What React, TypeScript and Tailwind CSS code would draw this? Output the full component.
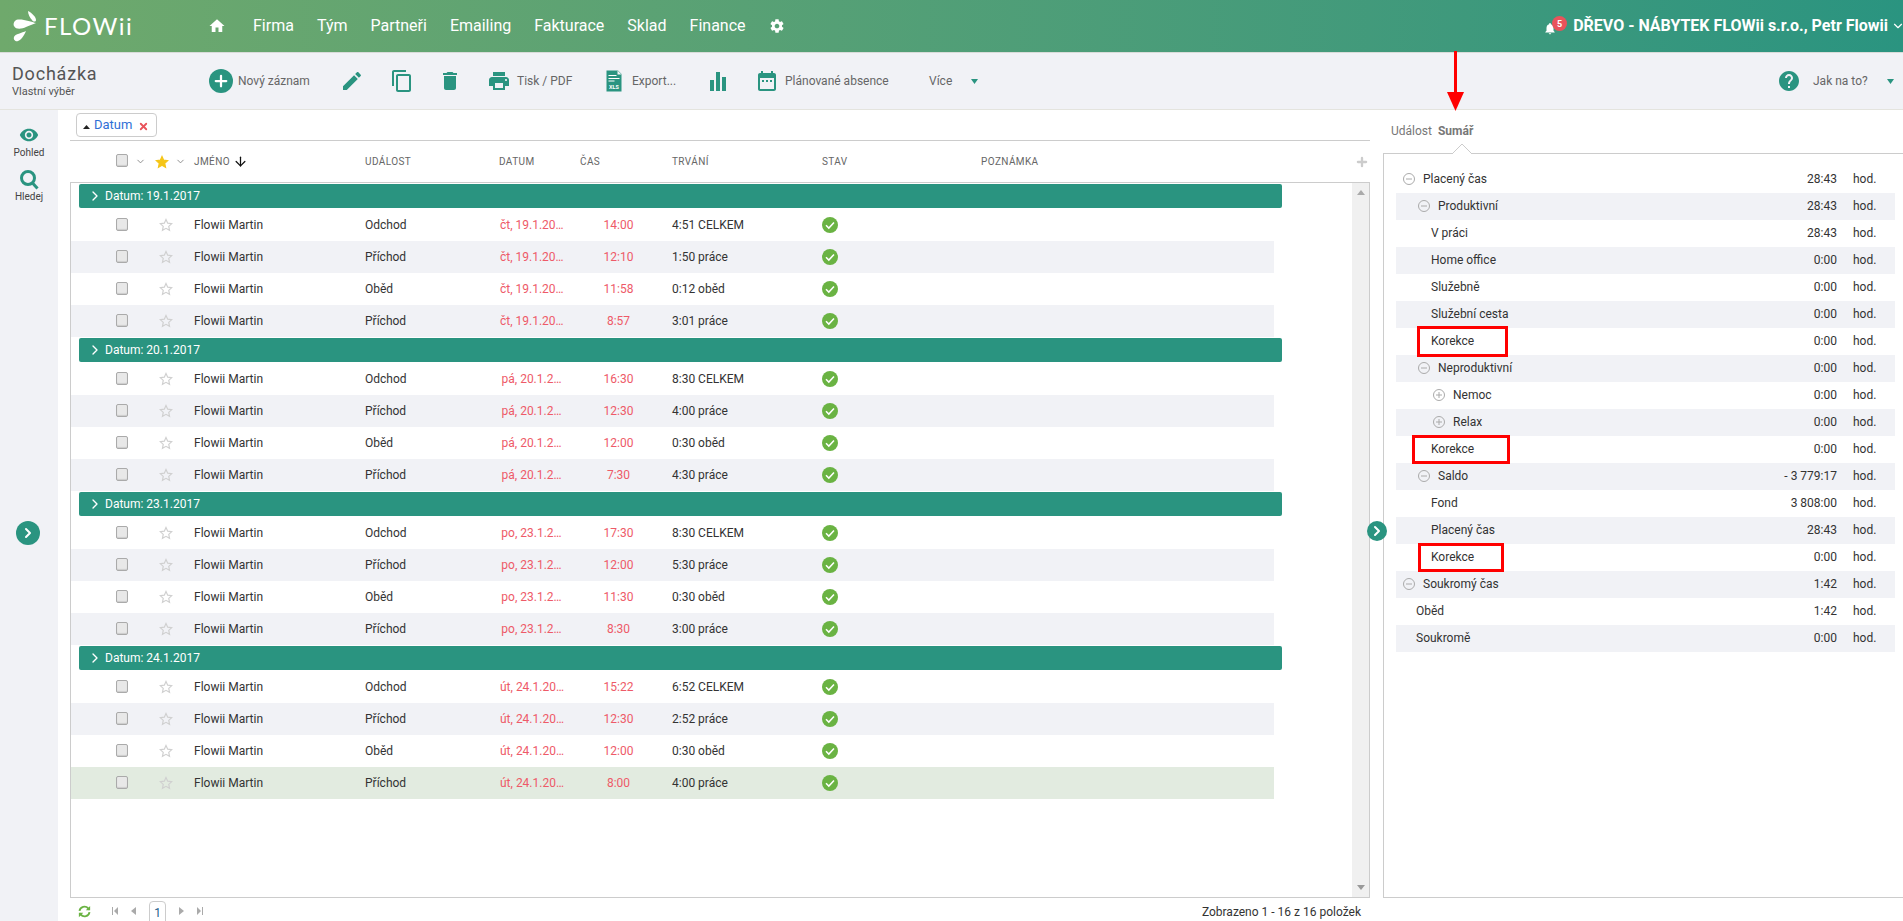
import React from "react";
import { ChevronDown, ChevronRight, ArrowDown, Plus, X } from "lucide-react";

const TEAL = "#2a9480";

const MI: React.FC<{ d: string; size?: number; className?: string }> = ({ d, size = 24, className }) => (
  <svg width={size} height={size} viewBox="0 0 24 24" fill={TEAL} className={className}>
    <path d={d} />
  </svg>
);

const Logo = () => (
  <svg width="26" height="32" viewBox="0 0 26 32" fill="#fff">
    <path d="M16 1C20 3 24 7 24 10C24 12 21 12 20 10C18 8 16 4 16 1Z" />
    <path d="M24 13C20 12 12 9 6 9.5C2 10 1 14 2 16C4 20 10 19 14 17C17 16 21 14 24 13Z" />
    <path d="M14 21C10 23 3 24 2 27C1 30 4 32 6 31C9 30 12 26 14 21Z" />
  </svg>
);

const Checkbox = () => (
  <span className="mb-[2px] block h-[13px] w-[12px] rounded-[2px] border border-[#aaa] bg-[#e8e8e8] shadow-[inset_0_-1px_1px_#ccc]" />
);

const Star = ({ filled }: { filled?: boolean }) => (
  <svg width="14" height="14" viewBox="0 0 24 24" fill={filled ? "#f5c518" : "none"} stroke={filled ? "#f5c518" : "#d0d0d0"} strokeWidth="2">
    <path d="M12 2.5l2.9 6.3 6.9.8-5.1 4.7 1.4 6.8-6.1-3.4-6.1 3.4 1.4-6.8L2.2 9.6l6.9-.8z" />
  </svg>
);

const Check = () => (
  <svg width="16" height="16" viewBox="0 0 16 16">
    <circle cx="8" cy="8" r="8" fill="#6ab343" />
    <path d="M4 8.3l2.8 2.8L12 5.4" fill="none" stroke="#fff" strokeWidth="1.5" />
  </svg>
);

const Caret = ({ color = TEAL }: { color?: string }) => (
  <svg width="7" height="5" viewBox="0 0 7 5" fill={color}>
    <path d="M0 0h7L3.5 5z" />
  </svg>
);

const Toggle = ({ open }: { open: boolean }) => (
  <svg width="12" height="12" viewBox="0 0 12 12" fill="none" stroke="#aaa" className="mr-[8px] shrink-0">
    <circle cx="6" cy="6" r="5.5" />
    <path d="M3 6h6" />
    {!open && <path d="M6 3v6" />}
  </svg>
);

const GRID = "grid grid-cols-[75px_40px_179px_135px_63px_109px_150px_159px_1fr] items-center";

type Row = { event: string; date: string; time: string; dur: string };

const groups: { title: string; rows: Row[] }[] = [
  {
    title: "Datum: 19.1.2017",
    rows: [
      { event: "Odchod", date: "čt, 19.1.20…", time: "14:00", dur: "4:51 CELKEM" },
      { event: "Příchod", date: "čt, 19.1.20…", time: "12:10", dur: "1:50 práce" },
      { event: "Oběd", date: "čt, 19.1.20…", time: "11:58", dur: "0:12 oběd" },
      { event: "Příchod", date: "čt, 19.1.20…", time: "8:57", dur: "3:01 práce" },
    ],
  },
  {
    title: "Datum: 20.1.2017",
    rows: [
      { event: "Odchod", date: "pá, 20.1.2…", time: "16:30", dur: "8:30 CELKEM" },
      { event: "Příchod", date: "pá, 20.1.2…", time: "12:30", dur: "4:00 práce" },
      { event: "Oběd", date: "pá, 20.1.2…", time: "12:00", dur: "0:30 oběd" },
      { event: "Příchod", date: "pá, 20.1.2…", time: "7:30", dur: "4:30 práce" },
    ],
  },
  {
    title: "Datum: 23.1.2017",
    rows: [
      { event: "Odchod", date: "po, 23.1.2…", time: "17:30", dur: "8:30 CELKEM" },
      { event: "Příchod", date: "po, 23.1.2…", time: "12:00", dur: "5:30 práce" },
      { event: "Oběd", date: "po, 23.1.2…", time: "11:30", dur: "0:30 oběd" },
      { event: "Příchod", date: "po, 23.1.2…", time: "8:30", dur: "3:00 práce" },
    ],
  },
  {
    title: "Datum: 24.1.2017",
    rows: [
      { event: "Odchod", date: "út, 24.1.20…", time: "15:22", dur: "6:52 CELKEM" },
      { event: "Příchod", date: "út, 24.1.20…", time: "12:30", dur: "2:52 práce" },
      { event: "Oběd", date: "út, 24.1.20…", time: "12:00", dur: "0:30 oběd" },
      { event: "Příchod", date: "út, 24.1.20…", time: "8:00", dur: "4:00 práce" },
    ],
  },
];

const summary: { label: string; value: string; pl: string; toggle?: "open" | "closed" }[] = [
  { label: "Placený čas", value: "28:43", pl: "pl-[7px]", toggle: "open" },
  { label: "Produktivní", value: "28:43", pl: "pl-[22px]", toggle: "open" },
  { label: "V práci", value: "28:43", pl: "pl-[35px]" },
  { label: "Home office", value: "0:00", pl: "pl-[35px]" },
  { label: "Služebně", value: "0:00", pl: "pl-[35px]" },
  { label: "Služební cesta", value: "0:00", pl: "pl-[35px]" },
  { label: "Korekce", value: "0:00", pl: "pl-[35px]" },
  { label: "Neproduktivní", value: "0:00", pl: "pl-[22px]", toggle: "open" },
  { label: "Nemoc", value: "0:00", pl: "pl-[37px]", toggle: "closed" },
  { label: "Relax", value: "0:00", pl: "pl-[37px]", toggle: "closed" },
  { label: "Korekce", value: "0:00", pl: "pl-[35px]" },
  { label: "Saldo", value: "- 3 779:17", pl: "pl-[22px]", toggle: "open" },
  { label: "Fond", value: "3 808:00", pl: "pl-[35px]" },
  { label: "Placený čas", value: "28:43", pl: "pl-[35px]" },
  { label: "Korekce", value: "0:00", pl: "pl-[35px]" },
  { label: "Soukromý čas", value: "1:42", pl: "pl-[7px]", toggle: "open" },
  { label: "Oběd", value: "1:42", pl: "pl-[20px]" },
  { label: "Soukromě", value: "0:00", pl: "pl-[20px]" },
];

const nav = ["Firma", "Tým", "Partneři", "Emailing", "Fakturace", "Sklad", "Finance"];

const Handle = ({ className }: { className: string }) => (
  <div className={`absolute flex items-center justify-center rounded-full bg-[#2a9480] ${className}`}>
    <ChevronRight size={16} strokeWidth={3} color="#fff" />
  </div>
);

export default function App() {
  return (
    <div className="relative flex h-screen w-full flex-col overflow-hidden bg-white font-['Roboto',sans-serif] text-xs text-[#333]">
      {/* top bar */}
      <header className="flex h-[52px] shrink-0 items-center bg-gradient-to-r from-[#6fa96c] to-[#2a9480] text-white">
        <div className="ml-[12px] w-[26px]">
          <Logo />
        </div>
        <span className="ml-[6px] w-[164px] font-['Lato',sans-serif] text-[24px] font-normal tracking-[1.5px]">FLOWii</span>
        <svg width="18" height="18" viewBox="0 0 24 24" fill="#fff">
          <path d="M10 20v-6h4v6h5v-8h3L12 3 2 12h3v8z" />
        </svg>
        <nav className="ml-[27px] flex items-center gap-[23px] text-[16px]">
          {nav.map((n) => (
            <span key={n}>{n}</span>
          ))}
          <svg width="16" height="16" viewBox="0 0 24 24" fill="#fff">
            <path d="M19.4 13c.04-.33.1-.66.1-1s-.06-.67-.1-1l2.1-1.65c.2-.15.25-.42.13-.64l-2-3.46c-.12-.22-.39-.3-.61-.22l-2.49 1c-.52-.4-1.08-.73-1.69-.98l-.38-2.65C14.46 2.18 14.25 2 14 2h-4c-.25 0-.46.18-.49.42l-.38 2.65c-.61.25-1.17.59-1.69.98l-2.49-1c-.23-.09-.49 0-.61.22l-2 3.46c-.13.22-.07.49.12.64L4.6 11c-.04.33-.1.66-.1 1s.06.67.1 1l-2.11 1.65c-.19.15-.25.42-.12.64l2 3.46c.12.22.39.3.61.22l2.49-1c.52.4 1.08.73 1.69.98l.38 2.65c.03.24.24.42.49.42h4c.25 0 .46-.18.49-.42l.38-2.65c.61-.25 1.17-.59 1.69-.98l2.49 1c.23.09.49 0 .61-.22l2-3.46c.12-.22.07-.49-.12-.64L19.4 13zM12 15.5c-1.93 0-3.5-1.57-3.5-3.5s1.57-3.5 3.5-3.5 3.5 1.57 3.5 3.5-1.57 3.5-3.5 3.5z" />
          </svg>
        </nav>
        <div className="relative ml-auto flex items-center">
          <svg width="14" height="15" viewBox="0 0 24 24" fill="#fff" className="mr-[16px] mt-[5px]">
            <path d="M12 22c1.1 0 2-.9 2-2h-4c0 1.1.9 2 2 2zm6-6v-5c0-3.07-1.64-5.64-4.5-6.32V4c0-.83-.67-1.5-1.5-1.5s-1.5.67-1.5 1.5v.68C7.63 5.36 6 7.92 6 11v5l-2 2v1h16v-1l-2-2z" />
          </svg>
          <span className="absolute left-[9px] top-[1px] flex h-[15px] w-[15px] items-center justify-center rounded-full bg-[#e9535b] text-[9px] font-bold">5</span>
          <span className="text-[16px] font-bold">DŘEVO - NÁBYTEK FLOWii s.r.o., Petr Flowii</span>
          <ChevronDown size={14} className="ml-[3px] mr-[-2px]" />
        </div>
      </header>

      {/* toolbar */}
      <div className="flex h-[58px] shrink-0 items-center border-t border-b border-t-[#d9dcd9] border-b-[#e4e4de] bg-[#f1f2f6] text-[#666]">
        <div className="w-[209px] pl-3">
          <div className="text-[18px] leading-[22px] tracking-[0.8px] text-[#555]">Docházka</div>
          <div className="text-[11px] leading-[14px] text-[#555]">Vlastní výběr</div>
        </div>
        <div className="flex w-[131px] items-center gap-[5px]">
          <span className="flex h-6 w-6 items-center justify-center rounded-full bg-[#2a9480]">
            <Plus size={18} strokeWidth={3} color="#fff" />
          </span>
          Nový záznam
        </div>
        <div className="w-[50px]">
          <MI d="M3 17.25V21h3.75L17.81 9.94l-3.75-3.75L3 17.25zM20.71 7.04c.39-.39.39-1.02 0-1.41l-2.34-2.34c-.39-.39-1.02-.39-1.41 0l-1.83 1.83 3.75 3.75 1.83-1.83z" />
        </div>
        <div className="w-[48px]">
          <MI d="M16 1H4c-1.1 0-2 .9-2 2v14h2V3h12V1zm3 4H8c-1.1 0-2 .9-2 2v14c0 1.1.9 2 2 2h11c1.1 0 2-.9 2-2V7c0-1.1-.9-2-2-2zm0 16H8V7h11v14z" />
        </div>
        <div className="w-[49px]">
          <MI d="M6 19c0 1.1.9 2 2 2h8c1.1 0 2-.9 2-2V7H6v12zM19 4h-3.5l-1-1h-5l-1 1H5v2h14V4z" />
        </div>
        <div className="flex w-[115px] items-center gap-[6px]">
          <MI d="M19 8H5c-1.66 0-3 1.34-3 3v6h4v4h12v-4h4v-6c0-1.66-1.34-3-3-3zm-3 11H8v-5h8v5zm3-7c-.55 0-1-.45-1-1s.45-1 1-1 1 .45 1 1-.45 1-1 1zm-1-9H6v4h12V3z" />
          Tisk / PDF
        </div>
        <div className="flex w-[104px] items-center gap-[6px]">
          <svg width="24" height="24" viewBox="0 0 24 24">
            <path d="M4.5 1.5H16l3.5 3.5v17.5h-15z" fill={TEAL} />
            <path d="M15.5 1.5v4h4" fill="#f1f2f6" />
            <path d="M6.5 6.5h8M6.5 9.5h11M6.5 12h6" stroke="#fff" strokeWidth="1" />
            <text x="12" y="20" textAnchor="middle" fontSize="5.5" fontWeight="700" fill="#fff">XLS</text>
          </svg>
          Export...
        </div>
        <div className="w-[49px]">
          <svg width="24" height="24" viewBox="0 0 24 24" fill={TEAL}>
            <rect x="4" y="11" width="4" height="11" />
            <rect x="10" y="3" width="4" height="19" />
            <rect x="16" y="8" width="4" height="14" />
          </svg>
        </div>
        <div className="flex w-[174px] items-center gap-[6px]">
          <MI d="M9 11H7v2h2v-2zm4 0h-2v2h2v-2zm4 0h-2v2h2v-2zm2-7h-1V2h-2v2H8V2H6v2H5c-1.11 0-1.99.9-1.99 2L3 20c0 1.1.89 2 2 2h14c1.1 0 2-.9 2-2V6c0-1.1-.9-2-2-2zm0 16H5V9h14v11z" />
          Plánované absence
        </div>
        <div className="flex w-[49px] items-center justify-between">
          Více
          <Caret />
        </div>
        <div className="ml-auto flex items-center">
          <svg width="24" height="24" viewBox="0 0 24 24" fill={TEAL}>
            <path d="M12 2C6.48 2 2 6.48 2 12s4.48 10 10 10 10-4.48 10-10S17.52 2 12 2zm1 17h-2v-2h2v2zm2.07-7.75l-.9.92C13.45 12.9 13 13.5 13 15h-2v-.5c0-1.1.45-2.1 1.17-2.83l1.24-1.26c.37-.36.59-.86.59-1.41 0-1.1-.9-2-2-2s-2 .9-2 2H8c0-2.21 1.79-4 4-4s4 1.79 4 4c0 .88-.36 1.68-.93 2.25z" />
          </svg>
          <span className="ml-[12px] w-[74px]">Jak na to?</span>
          <Caret />
          <span className="w-[9px]" />
        </div>
      </div>

      {/* body */}
      <div className="flex min-h-0 flex-1">
        <aside className="w-[58px] shrink-0 bg-[#f1f2f6] pt-[15px] text-center text-[10px] text-[#444]">
          <div className="flex flex-col items-center">
            <svg width="22" height="20" viewBox="0 0 24 24" fill={TEAL}>
              <path d="M12 4.5C7 4.5 2.73 7.61 1 12c1.73 4.39 6 7.5 11 7.5s9.27-3.11 11-7.5c-1.73-4.39-6-7.5-11-7.5zM12 17c-2.76 0-5-2.24-5-5s2.24-5 5-5 5 2.24 5 5-2.24 5-5 5zm0-8c-1.66 0-3 1.34-3 3s1.34 3 3 3 3-1.34 3-3-1.34-3-3-3z" />
            </svg>
            <span className="mt-px leading-[14px]">Pohled</span>
          </div>
          <div className="mt-[9px] flex flex-col items-center">
            <svg width="22" height="22" viewBox="0 0 22 22" fill="none" stroke={TEAL} strokeWidth="3">
              <circle cx="10" cy="9" r="6.5" />
              <path d="M14.5 14L19.5 19.5" />
            </svg>
            <span className="mt-[-1px] leading-[14px]">Hledej</span>
          </div>
        </aside>

        {/* list */}
        <section className="flex w-[1325px] shrink-0 flex-col pl-3 pr-[13px]">
          <div className="flex h-[31px] shrink-0 items-start border-b border-[#ccc] pl-[6px] pt-[3px]">
            <div className="flex h-[24px] w-[81px] items-center rounded-[4px] border border-[#ccc] pl-[6px]">
              <svg width="7" height="4" viewBox="0 0 7 4" fill="#222" className="mt-[3px]">
                <path d="M3.5 0L7 4H0z" />
              </svg>
              <span className="ml-[4px] text-[13px] text-[#2f6fd6]">Datum</span>
              <X size={11} strokeWidth={4} color="#e9535b" className="ml-[6px] mt-[2px]" />
            </div>
          </div>
          <div className={`${GRID} h-[41px] shrink-0 pl-px text-[10px] uppercase tracking-[0.4px] text-[#666]`}>
            <div className="flex items-center pl-[45px]">
              <Checkbox />
              <ChevronDown size={11} className="ml-[7px]" color="#888" />
            </div>
            <div className="flex items-center pl-[9px]">
              <Star filled />
              <ChevronDown size={11} className="ml-[6px]" color="#888" />
            </div>
            <div className="flex items-center pl-[8px]">
              Jméno
              <ArrowDown size={15} color="#111" className="ml-[3px]" />
            </div>
            <div>Událost</div>
            <div className="-ml-px">Datum</div>
            <div className="pl-[17px]">Čas</div>
            <div>Trvání</div>
            <div>Stav</div>
            <div className="flex items-center justify-between pr-[1px]">
              Poznámka
              <Plus size={14} strokeWidth={4} color="#ccc" />
            </div>
          </div>
          <div className="flex h-[716px] shrink-0 border border-[#ccc]">
            <div className="min-w-0 flex-1 pt-px">
              {groups.map((g, gi) => (
                <div key={g.title}>
                  <div className="mb-px ml-[8px] flex h-[24px] w-[1203px] items-center rounded-[2px] bg-[#2a9480] pl-[8px] text-white">
                    <ChevronRight size={16} strokeWidth={2} className="mr-[2px]" />
                    {g.title}
                  </div>
                  {g.rows.map((r, i) => {
                    const selected = gi === 3 && i === 3;
                    return (
                      <div
                        key={i}
                        className={`${GRID} h-[32px] w-[1203px] ${selected ? "bg-[#e2ebe0]" : i % 2 === 1 ? "bg-[#f1f2f6]" : ""}`}
                      >
                        <div className="pl-[45px]">
                          <Checkbox />
                        </div>
                        <div className="flex justify-center">
                          <Star />
                        </div>
                        <div className="pl-[8px]">Flowii Martin</div>
                        <div>{r.event}</div>
                        <div className="whitespace-nowrap text-center text-[#ee5a68]">{r.date}</div>
                        <div className="pl-[2px] text-center text-[#ee5a68]">{r.time}</div>
                        <div>{r.dur}</div>
                        <div>
                          <Check />
                        </div>
                        <div />
                      </div>
                    );
                  })}
                  <div className="h-px" />
                </div>
              ))}
            </div>
            <div className="flex w-[17px] shrink-0 flex-col items-center justify-between bg-[#f0f0f0] py-[7px]">
              <svg width="8" height="5" viewBox="0 0 8 5" fill="#aaa">
                <path d="M4 0l4 5H0z" />
              </svg>
              <svg width="8" height="5" viewBox="0 0 8 5" fill="#999">
                <path d="M0 0h8L4 5z" />
              </svg>
            </div>
          </div>
          <div className="flex h-[24px] shrink-0 items-start justify-between pr-[9px] pt-[6px]">
            <div className="flex items-start pl-[7px]">
              <svg width="15" height="15" viewBox="0 0 24 24" fill="none" stroke="#6ab343" strokeWidth="3">
                <path d="M4 11a8 8 0 0 1 14-4l2 2M20 13a8 8 0 0 1-14 4l-2-2" />
                <path d="M21 3v7h-7M3 21v-7h7" fill="#6ab343" stroke="none" />
              </svg>
              <div className="ml-[20px] mt-[3px] flex items-center gap-[13px] text-[#aaa]">
                <svg width="6" height="8" viewBox="0 0 6 8" fill="#aaa"><path d="M0 0h1v8H0zM6 0v8L2 4z" /></svg>
                <svg width="5" height="8" viewBox="0 0 5 8" fill="#aaa"><path d="M5 0v8L0 4z" /></svg>
              </div>
              <div className="ml-[13px] mt-[-3px] flex h-[24px] w-[17px] justify-center rounded-[4px] border border-[#ccc] pt-[3px] text-[#1c5d8a]">1</div>
              <div className="ml-[13px] mt-[3px] flex items-center gap-[13px]">
                <svg width="5" height="8" viewBox="0 0 5 8" fill="#aaa"><path d="M0 0v8l5-4z" /></svg>
                <svg width="6" height="8" viewBox="0 0 6 8" fill="#aaa"><path d="M0 0v8l4-4zM5 0h1v8H5z" /></svg>
              </div>
            </div>
            <span>Zobrazeno 1 - 16 z 16 položek</span>
          </div>
        </section>

        {/* summary */}
        <section className="flex min-w-0 flex-1 flex-col">
          <div className="flex h-[43px] shrink-0 items-start gap-[6px] pl-[8px] pt-[13px] text-[#777]">
            <span>Událost</span>
            <span className="font-bold">Sumář</span>
          </div>
          <div className="relative h-[745px] shrink-0 border-b border-l border-t border-[#ccc] pl-[12px] pr-[8px] pt-[12px]">
            <svg width="20" height="10" viewBox="0 0 20 10" className="absolute left-[68px] top-[-10px]">
              <path d="M0 10L10 0l10 10" fill="#fff" stroke="#ccc" />
            </svg>
            {summary.map((s, i) => (
              <div key={i} className={`flex h-[27px] items-center pb-px ${s.pl} ${i % 2 === 1 ? "bg-[#f1f2f6]" : ""}`}>
                {s.toggle && <Toggle open={s.toggle === "open"} />}
                <span className="flex-1">{s.label}</span>
                <span>{s.value}</span>
                <span className="ml-4 w-[42px]">hod.</span>
              </div>
            ))}
          </div>
        </section>
      </div>

      {/* overlays */}
      <Handle className="left-[16px] top-[521px] h-6 w-6" />
      <Handle className="left-[1367px] top-[521px] h-5 w-5" />

      {/* annotations */}
      <div className="absolute left-[1453.5px] top-[51px] h-[42px] w-[3px] bg-[#f00]" />
      <svg width="17" height="19" viewBox="0 0 17 19" className="absolute left-[1447px] top-[92px]">
        <path d="M0 0h17L8.5 19z" fill="#f00" />
      </svg>
      <div className="absolute left-[1417px] top-[326px] h-[31px] w-[91px] border-[3px] border-[#f00]" />
      <div className="absolute left-[1412px] top-[435px] h-[29px] w-[98px] border-[3px] border-[#f00]" />
      <div className="absolute left-[1418px] top-[543px] h-[29px] w-[86px] border-[3px] border-[#f00]" />
    </div>
  );
}
